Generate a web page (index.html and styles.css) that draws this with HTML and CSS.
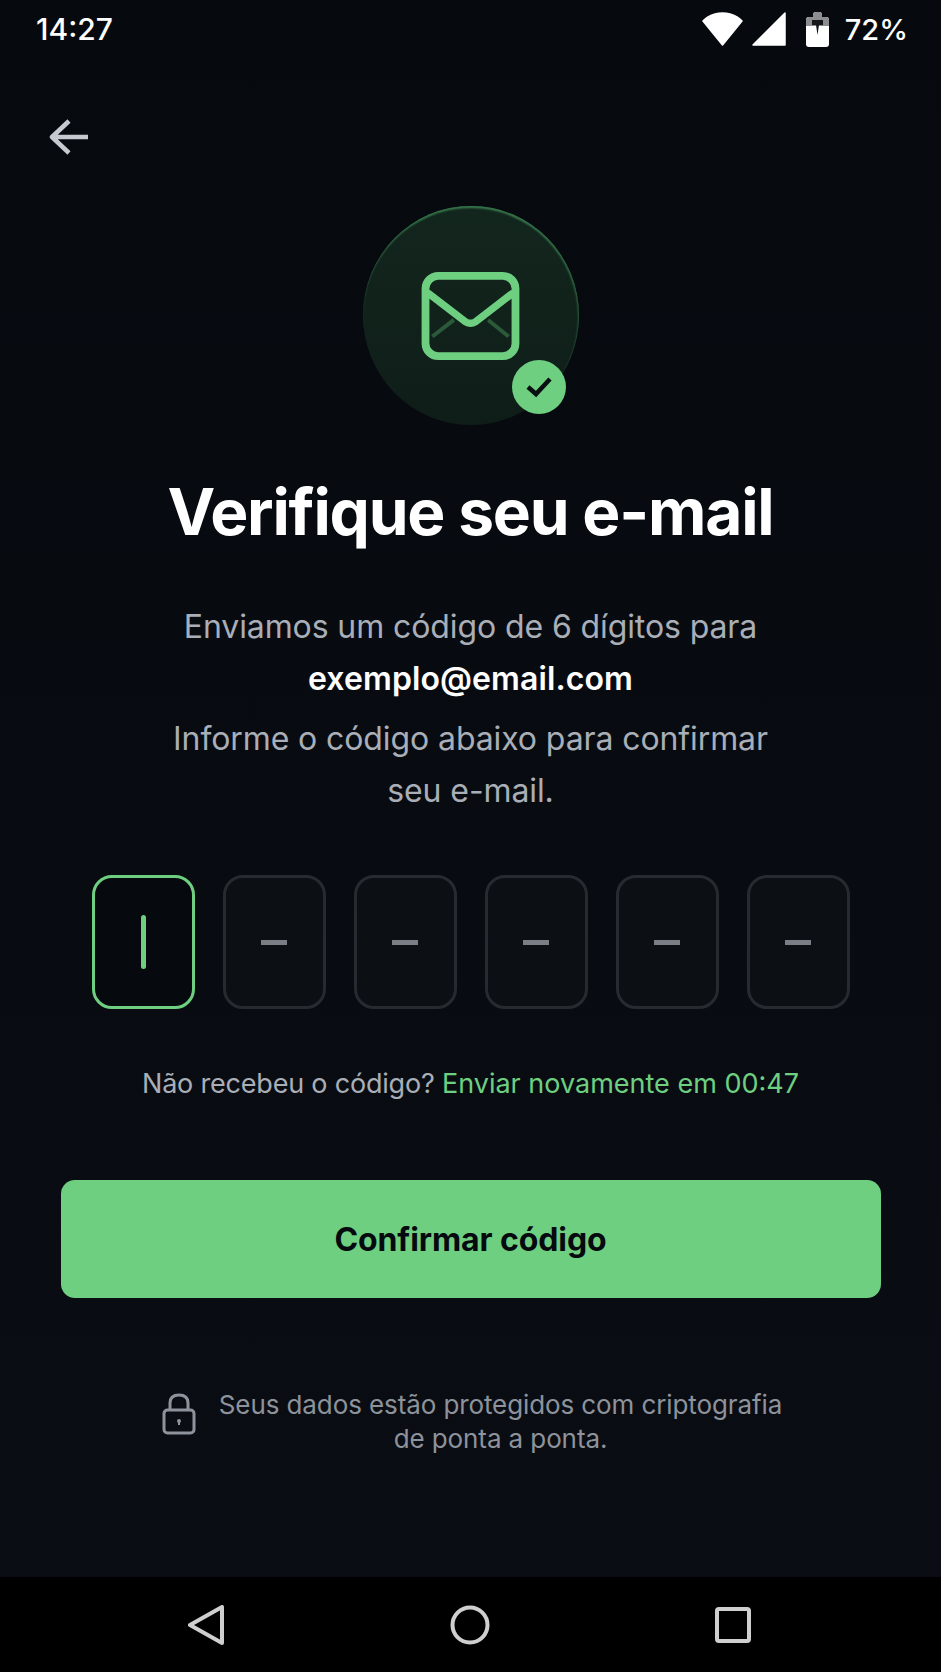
FILE: index.html
```html
<!DOCTYPE html>
<html lang="pt-BR">
<head>
  <meta charset="UTF-8" />
  <meta name="viewport" content="width=device-width, initial-scale=1" />
  <title>Verifique seu e-mail</title>
  <link rel="stylesheet" href="styles.css">
</head>
<body>

  <header class="status-bar">
    <span class="status-time">14:27</span>
    <div class="status-right">
      <svg class="icon-wifi" width="41" height="34" viewBox="0 0 41 34"><path d="M20.5 33 L1 9 C1 9 8 1 20.5 1 C33 1 40 9 40 9 Z" fill="#fff" stroke="#fff" stroke-width="1.5" stroke-linejoin="round"/></svg>
      <svg class="icon-signal" width="34" height="34" viewBox="0 0 34 34"><path d="M33 1 V33 H1 Z" fill="#fff" stroke="#fff" stroke-width="1.5" stroke-linejoin="round"/></svg>
      <svg class="icon-battery" width="23" height="35" viewBox="0 0 23 35">
        <path d="M7 5 V3 Q7 0 10 0 H13 Q16 0 16 3 V5 H20 Q23 5 23 8 V32 Q23 35 20 35 H3 Q0 35 0 32 V8 Q0 5 3 5 Z" fill="#fff"/>
        <path d="M7 5 V3 Q7 0 10 0 H13 Q16 0 16 3 V5 H20 Q23 5 23 8 V14 H0 V8 Q0 5 3 5 Z" fill="#8b8d90"/>
        <path d="M6 8 H17 V13 H13 L11.5 23 L10 13 H6 Z" fill="#14161a"/>
      </svg>
      <span class="status-pct">72%</span>
    </div>
  </header>

  <main class="screen">
    <button class="back-btn" aria-label="Voltar">
      <svg width="40" height="36" viewBox="0 0 40 36" fill="none" stroke="#c6cad0" stroke-width="4.5" stroke-linejoin="round"><path d="M20 2 L3 18 L20 34 M3 18 H39"/></svg>
    </button>

    <div class="hero">
      <div class="hero-circle">
        <svg width="99" height="88" viewBox="0 0 100 90" fill="none">
          <path d="M11 66 L33 49 M89 66 L68 49" stroke="#3f8a54" stroke-width="4" opacity="0.55"/>
          <rect x="4" y="4" width="92" height="82" rx="13" stroke="#6ecf81" stroke-width="8"/>
          <path d="M6 21 L45 51 Q50 54 55 51 L94 21" stroke="#6ecf81" stroke-width="7.5" stroke-linejoin="round"/>
        </svg>
        <span class="hero-badge">
          <svg width="28" height="22" viewBox="0 0 28 22" fill="none" stroke="#0a0f12" stroke-width="4.5"><path d="M3 11 L11 18 L25 3"/></svg>
        </span>
      </div>
    </div>

    <h1 class="title">Verifique seu e-mail</h1>

    <div class="intro">
      <p class="intro-line">Enviamos um código de 6 dígitos para</p>
      <p class="intro-line intro-email">exemplo@email.com</p>
      <p class="intro-line intro-gap">Informe o código abaixo para confirmar<br>seu e-mail.</p>
    </div>

    <div class="code-row">
      <div class="code-box code-box-active"><span class="code-cursor"></span></div>
      <div class="code-box"><span class="code-dash"></span></div>
      <div class="code-box"><span class="code-dash"></span></div>
      <div class="code-box"><span class="code-dash"></span></div>
      <div class="code-box"><span class="code-dash"></span></div>
      <div class="code-box"><span class="code-dash"></span></div>
    </div>

    <p class="resend">Não recebeu o código? <span class="resend-link">Enviar novamente em 00:47</span></p>

    <button class="confirm-btn">Confirmar código</button>

    <div class="secure-note">
      <svg class="secure-icon" width="34" height="42" viewBox="0 0 34 42" fill="none" stroke="#8d929b" stroke-width="3"><path d="M8 17 V10 Q8 2 17 2 Q26 2 26 10 V17"/><rect x="2" y="17" width="30" height="23" rx="3.5"/><circle cx="17" cy="28" r="2" fill="#8d929b" stroke="none"/><path d="M17 28 V32" stroke-width="2"/></svg>
      <p class="secure-text">Seus dados estão protegidos com criptografia<br>de ponta a ponta.</p>
    </div>
  </main>

  <nav class="nav-bar">
    <svg width="36" height="40" viewBox="0 0 36 40" fill="none" stroke="#cfcfcf" stroke-width="4" stroke-linejoin="round"><path d="M34 2 V38 L2 20 Z"/></svg>
    <svg width="40" height="40" viewBox="0 0 40 40" fill="none" stroke="#cfcfcf" stroke-width="4"><circle cx="20" cy="20" r="17.5"/></svg>
    <svg width="36" height="36" viewBox="0 0 36 36" fill="none" stroke="#cfcfcf" stroke-width="4" stroke-linejoin="round"><rect x="2" y="2" width="32" height="32" rx="2"/></svg>
  </nav>

</body>
</html>
```

FILE: styles.css
```css
/* Reset and base */
* { box-sizing: border-box; }
html, body { height: 100%; }
body {
  margin: 0;
  height: 1672px;
  background: linear-gradient(#060a0f, #0a0e14);
  color: #fff;
  font-family: Inter, 'Liberation Sans', sans-serif;
  display: flex;
  flex-direction: column;
  overflow: hidden;
}
p { margin: 0; }

/* Status bar */
.status-bar {
  height: 60px;
  padding: 12px 33px 0 36px;
  display: flex;
  justify-content: space-between;
  align-items: flex-start;
}
.status-time {
  font-size: 30px;
  font-weight: 500;
  line-height: 35px;
}
.status-right {
  display: flex;
  align-items: flex-start;
}
.icon-signal { margin-left: 9px; }
.icon-battery { margin-left: 20px; }
.status-pct {
  margin-left: 16px;
  font-size: 29px;
  font-weight: 500;
  line-height: 35px;
}

/* Main column */
.screen {
  flex: 1;
  display: flex;
  flex-direction: column;
  align-items: center;
}
.back-btn {
  align-self: flex-start;
  margin: 59px 0 0 49px;
  padding: 0;
  background: none;
  border: none;
  height: 36px;
}

.hero { margin-top: 51px; }
.hero-circle {
  position: relative;
  width: 216px;
  height: 219px;
  border-radius: 50%;
  background: linear-gradient(#13261e, #0f1d18);
  box-shadow: inset 0 3px 2px -1px #35744a, inset -2px 2px 2px -1px #2a5a3b;
  display: flex;
  align-items: center;
  justify-content: center;
}
.hero-badge {
  position: absolute;
  left: 149px;
  top: 154px;
  width: 54px;
  height: 54px;
  border-radius: 50%;
  background: #6ecf81;
  display: flex;
  align-items: center;
  justify-content: center;
}

.title {
  margin: 47px 0 0;
  font-size: 64px;
  font-weight: 700;
  line-height: 80px;
  letter-spacing: -1.2px;
}

.intro {
  margin-top: 49px;
  text-align: center;
  color: #a9aeb7;
  font-size: 32px;
  line-height: 52px;
  letter-spacing: -0.1px;
}
.intro-email {
  color: #fff;
  font-weight: 600;
  letter-spacing: 0.1px;
}
.intro-gap { margin-top: 8px; }

.code-row {
  margin-top: 58px;
  display: flex;
  gap: 28px;
}
.code-box {
  width: 103px;
  height: 134px;
  border: 3px solid #272a30;
  border-radius: 20px;
  background: #0c0f14;
  display: flex;
  align-items: center;
  justify-content: center;
}
.code-box-active {
  border-color: #6ecf81;
  background: #060a0f;
}
.code-cursor {
  width: 5px;
  height: 54px;
  border-radius: 3px;
  background: #6ecf81;
}
.code-dash {
  width: 26px;
  height: 5px;
  background: #7b7e85;
}

.resend {
  margin-top: 57px;
  font-size: 27px;
  line-height: 36px;
  letter-spacing: -0.2px;
  color: #a9aeb7;
}
.resend-link {
  color: #6ecf81;
  letter-spacing: 0;
}

.confirm-btn {
  margin-top: 78px;
  width: 820px;
  height: 118px;
  border: none;
  border-radius: 14px;
  background: #6ecf81;
  color: #060a0f;
  font-family: inherit;
  font-size: 32px;
  font-weight: 700;
  letter-spacing: -0.1px;
}

.secure-note {
  margin-top: 90px;
  padding-left: 3px;
  display: flex;
  align-items: flex-start;
  gap: 23px;
}
.secure-icon { margin-top: 5px; }
.secure-text {
  text-align: center;
  color: #8d929b;
  font-size: 26px;
  line-height: 34px;
  letter-spacing: -0.1px;
}

/* Android nav */
.nav-bar {
  height: 95px;
  background: #000;
  display: flex;
  justify-content: space-between;
  align-items: center;
  padding: 0 190px 0 188px;
}
```
